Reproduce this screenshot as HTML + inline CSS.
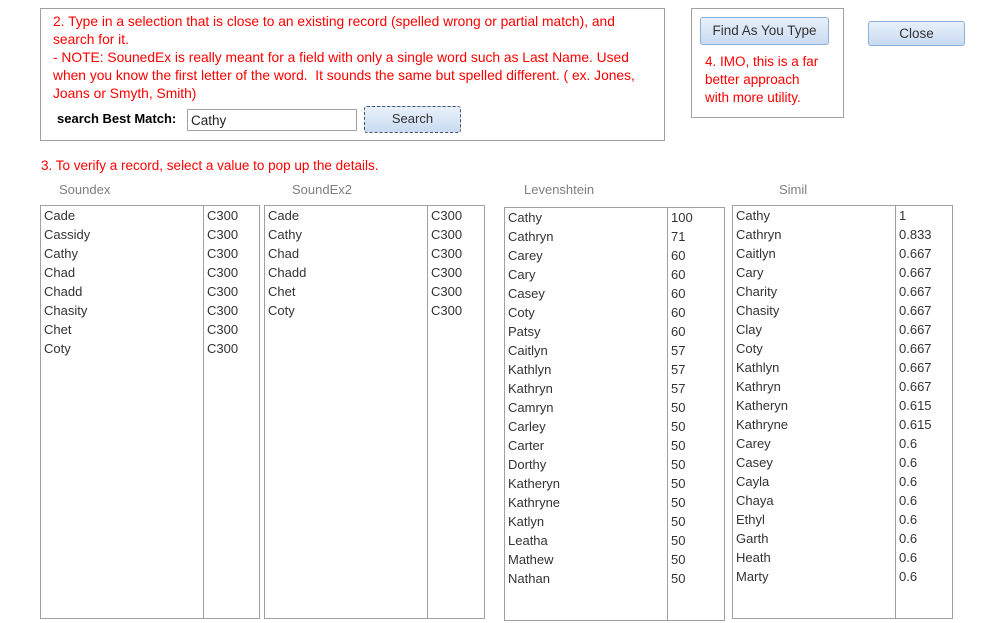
<!DOCTYPE html>
<html><head><meta charset="utf-8"><style>
body{margin:0;width:981px;height:623px;background:#fff;font-family:"Liberation Sans",sans-serif;font-size:13px;position:relative;overflow:hidden}
.a{position:absolute}
.red{color:#f00}
.box{position:absolute;border:1px solid #a0a0a0;box-sizing:border-box}
.btn{position:absolute;box-sizing:border-box;border:1px solid #8eb0d8;border-radius:3px;background:linear-gradient(#e8f0fa,#c9dbf1);color:#333;text-align:center;font-size:13px}
.hdr{position:absolute;color:#7f7f7f;font-size:13px}
.list{position:absolute;border:1px solid #a0a0a0;box-sizing:border-box;color:#333}
.list .div{position:absolute;top:0;bottom:0;width:1px;background:#a0a0a0}
.row{position:absolute;left:3px;height:19px;line-height:19px;white-space:nowrap}
</style></head><body>
<div class="box" style="left:40px;top:8px;width:625px;height:133px"></div>
<div class="a red" style="left:53px;top:13px;line-height:18px;width:612px;font-size:13.8px;white-space:nowrap">2. Type in a selection that is close to an existing record (spelled wrong or partial match), and<br>search for it.<br>- NOTE: SounedEx is really meant for a field with only a single word such as Last Name. Used<br>when you know the first letter of the word.&nbsp; It sounds the same but spelled different. ( ex. Jones,<br>Joans or Smyth, Smith)</div>
<div class="a" style="left:57px;top:111px;font-weight:bold;font-size:13px">search Best Match:</div>
<div class="a" style="left:187px;top:109px;width:170px;height:22px;border:1px solid #a0a0a0;box-sizing:border-box;padding:2px 3px;font-size:13.5px;line-height:17px;color:#222">Cathy</div>
<div class="btn" style="left:364px;top:106px;width:97px;height:27px;line-height:24px;border:1px dashed #456">Search</div>
<div class="box" style="left:691px;top:8px;width:153px;height:110px"></div>
<div class="btn" style="left:700px;top:17px;width:129px;height:28px;line-height:26px;font-size:13.5px">Find As You Type</div>
<div class="a red" style="left:705px;top:53px;line-height:18px;font-size:13.5px">4. IMO, this is a far<br>better approach<br>with more utility.</div>
<div class="btn" style="left:868px;top:21px;width:97px;height:25px;line-height:23px;font-size:13.5px">Close</div>
<div class="a red" style="left:41px;top:158px;font-size:13.5px">3. To verify a record, select a value to pop up the details.</div>
<div class="hdr" style="left:59px;top:182px">Soundex</div>
<div class="hdr" style="left:292px;top:182px">SoundEx2</div>
<div class="hdr" style="left:524px;top:182px">Levenshtein</div>
<div class="hdr" style="left:779px;top:182px">Simil</div>
<div id="l1" class="list" style="left:40px;top:205px;width:220px;height:414px"><div class="div" style="left:162px"></div></div>
<div id="l2" class="list" style="left:264px;top:205px;width:221px;height:414px"><div class="div" style="left:162px"></div></div>
<div id="l3" class="list" style="left:504px;top:207px;width:221px;height:414px"><div class="div" style="left:162px"></div></div>
<div id="l4" class="list" style="left:732px;top:205px;width:221px;height:414px"><div class="div" style="left:162px"></div></div>
<script>
function fill(id,data){var el=document.getElementById(id);data.forEach(function(d,i){var a=document.createElement('div');a.className='row';a.style.top=(i*19)+'px';a.textContent=d[0];el.appendChild(a);var b=document.createElement('div');b.className='row';b.style.left='166px';b.style.top=(i*19)+'px';b.textContent=d[1];el.appendChild(b);});}
fill('l1',[["Cade","C300"],["Cassidy","C300"],["Cathy","C300"],["Chad","C300"],["Chadd","C300"],["Chasity","C300"],["Chet","C300"],["Coty","C300"]]);
fill('l2',[["Cade","C300"],["Cathy","C300"],["Chad","C300"],["Chadd","C300"],["Chet","C300"],["Coty","C300"]]);
fill('l3',[["Cathy","100"],["Cathryn","71"],["Carey","60"],["Cary","60"],["Casey","60"],["Coty","60"],["Patsy","60"],["Caitlyn","57"],["Kathlyn","57"],["Kathryn","57"],["Camryn","50"],["Carley","50"],["Carter","50"],["Dorthy","50"],["Katheryn","50"],["Kathryne","50"],["Katlyn","50"],["Leatha","50"],["Mathew","50"],["Nathan","50"]]);
fill('l4',[["Cathy","1"],["Cathryn","0.833"],["Caitlyn","0.667"],["Cary","0.667"],["Charity","0.667"],["Chasity","0.667"],["Clay","0.667"],["Coty","0.667"],["Kathlyn","0.667"],["Kathryn","0.667"],["Katheryn","0.615"],["Kathryne","0.615"],["Carey","0.6"],["Casey","0.6"],["Cayla","0.6"],["Chaya","0.6"],["Ethyl","0.6"],["Garth","0.6"],["Heath","0.6"],["Marty","0.6"]]);
</script>
</body></html>
